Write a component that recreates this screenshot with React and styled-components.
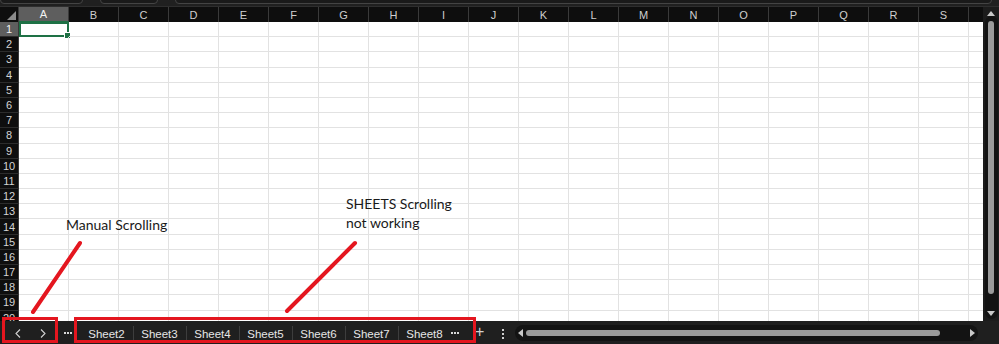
import React from 'react';
import styled, { createGlobalStyle } from 'styled-components';

const GlobalStyle = createGlobalStyle`
    html, body {
        margin: 0;
        padding: 0;
        background: #1f1f1f;
    }
    * {
        box-sizing: border-box;
    }
`;

const COLUMNS = 'ABCDEFGHIJKLMNOPQRST'.split('');
const ROWS = Array.from({ length: 20 }, (_, i) => i + 1);
const SHEETS = ['Sheet2', 'Sheet3', 'Sheet4', 'Sheet5', 'Sheet6', 'Sheet7', 'Sheet8'];
const RED = '#e4161f';

const Window = styled.div`
    position: relative;
    width: 999px;
    height: 344px;
    overflow: hidden;
    display: flex;
    flex-direction: column;
    background: #1f1f1f;
    font-family: "Liberation Sans", Arial, sans-serif;
`;

const FormulaStrip = styled.div`
    height: 7px;
    display: flex;
    align-items: flex-end;
    padding: 0 7px 2px 0;
    gap: 17px;
    background: #202020;
    border-bottom: 1px solid #2e2e2e;
    overflow: hidden;
`;

const StripBox = styled.div`
    width: ${p => p.$width ? `${p.$width}px` : 'auto'};
    flex: ${p => p.$grow ? 1 : 'none'};
    height: 20px;
    background: #1a1a1a;
    border: 1px solid #444;
    border-radius: 4px;
`;

const Main = styled.div`
    display: flex;
    height: 314px;
`;

const Sheet = styled.div`
    position: relative;
    flex: 1;
    overflow: hidden;
    background: #fff;
`;

const HeaderRow = styled.div`
    display: flex;
    height: 15px;
    background: #0e0e0e;
`;

const Corner = styled.div`
    position: relative;
    width: 19px;
    flex: none;
    border-right: 1px solid #3a3a3a;
    &::after {
        content: '';
        position: absolute;
        right: 2px;
        bottom: 2px;
        border-style: solid;
        border-width: 0 0 9px 9px;
        border-color: transparent transparent #8a8a8a transparent;
    }
`;

const ColHead = styled.div`
    width: 50px;
    flex: none;
    display: flex;
    align-items: center;
    justify-content: center;
    font-size: 11px;
    color: ${p => p.$active ? '#f2f2f2' : '#cfcfcf'};
    background: ${p => p.$active ? '#5e5e5e' : 'transparent'};
    border-right: 1px solid #3a3a3a;
    border-bottom: ${p => p.$active ? '1px solid #1e7145' : 'none'};
`;

const Row = styled.div`
    display: flex;
    height: 15.2px;
`;

const RowHead = styled.div`
    width: 19px;
    flex: none;
    display: flex;
    align-items: center;
    justify-content: center;
    font-size: 11px;
    color: ${p => p.$active ? '#f2f2f2' : '#d4d4d4'};
    background: ${p => p.$active ? '#5e5e5e' : '#0e0e0e'};
    border-bottom: 1px solid #2c2c2c;
    border-right: 1px solid #3a3a3a;
`;

const Cell = styled.div`
    position: relative;
    width: 50px;
    flex: none;
    border-right: 1px solid #e2e2e2;
    border-bottom: 1px solid #e2e2e2;
    ${p => p.$selected && `
        border: 2px solid #1e7145;
        &::after {
            content: '';
            position: absolute;
            right: -4px;
            bottom: -4px;
            width: 5px;
            height: 5px;
            background: #1e7145;
            border: 1px solid #fff;
        }
    `}
`;

const VScroll = styled.div`
    width: 16px;
    flex: none;
    display: flex;
    flex-direction: column;
    align-items: center;
    padding: 4px 0 2px;
    background: #1c1c1c;
`;

const Track = styled.div`
    display: flex;
    flex-direction: ${p => p.$vertical ? 'column' : 'row'};
    align-items: center;
    background: #131313;
    border-radius: 8px;
    ${p => p.$vertical ? `
        width: 13px;
        flex: 1;
        padding: 2px 0 3px;
    ` : `
        width: 463px;
        height: 16px;
        margin-left: 11px;
        padding: 0 3px;
    `}
`;

const Thumb = styled.div`
    background: #9b9b9b;
    border-radius: 3px;
    ${p => p.$vertical ? `
        width: 6px;
        height: 273px;
        margin: 3px 0 auto;
    ` : `
        height: 6px;
        width: 414px;
        margin: 0 auto 0 3px;
    `}
`;

const Arrow = styled.div`
    width: 0;
    height: 0;
    border-style: solid;
    ${p => ({
        up: 'border-width: 0 4px 5px 4px; border-color: transparent transparent #c9c9c9 transparent;',
        down: 'border-width: 5px 4px 0 4px; border-color: #c9c9c9 transparent transparent transparent;',
        left: 'border-width: 4px 5px 4px 0; border-color: transparent #c9c9c9 transparent transparent;',
        right: 'border-width: 4px 0 4px 5px; border-color: transparent transparent transparent #c9c9c9;'
    })[p.$dir]}
`;

const BottomBar = styled.div`
    height: 23px;
    display: flex;
    align-items: center;
    background: #1f1f1f;
    color: #e2e2e2;
`;

const NavGroup = styled.div`
    width: 60px;
    display: flex;
    align-items: center;
    gap: 17px;
    padding-left: 14px;
    padding-top: 2px;
`;

const NavButton = styled.div`
    width: 8px;
    height: 10px;
    display: flex;
    align-items: center;
    justify-content: center;
`;

const Dots = styled.div`
    display: flex;
    gap: 1px;
    margin-left: ${p => p.$gap}px;
    padding-top: 1px;
    span {
        width: 2px;
        height: 2px;
        background: #d8d8d8;
    }
`;

const Tabs = styled.div`
    display: flex;
    margin-left: 8px;
    height: 100%;
`;

const Tab = styled.div`
    width: 53px;
    display: flex;
    align-items: center;
    justify-content: center;
    padding-top: 3px;
    font-size: 11.5px;
    color: #e6e6e6;
    position: relative;
    &:not(:first-child)::before {
        content: '';
        position: absolute;
        left: 0;
        top: 5px;
        bottom: 1px;
        width: 1px;
        background: #3d3d3d;
    }
`;

const Plus = styled.div`
    margin-left: 16px;
    font-size: 16px;
    font-weight: 300;
    color: #d0d0d0;
    padding-bottom: 1px;
`;

const Kebab = styled.div`
    margin-left: 18px;
    display: flex;
    flex-direction: column;
    gap: 2px;
    padding-top: 2px;
    span {
        width: 2px;
        height: 2px;
        background: #cfcfcf;
    }
`;

const Overlay = styled.svg`
    position: absolute;
    inset: 0;
    pointer-events: none;
`;

const RedBox = styled.div`
    position: absolute;
    left: ${p => p.$left}px;
    top: 317px;
    width: ${p => p.$width}px;
    height: 26px;
    border: 3px solid ${RED};
    pointer-events: none;
`;

const Note = styled.div`
    position: absolute;
    left: ${p => p.$left}px;
    top: ${p => p.$top}px;
    font-family: Lato, "Liberation Sans", sans-serif;
    font-size: 14px;
    line-height: 19px;
    color: #1a1a1a;
`;

const Chevron = ({ left }) => (
    <svg width="6" height="9" viewBox="0 0 6 9">
        <polyline
            points={left ? '5,0.5 1,4.5 5,8.5' : '1,0.5 5,4.5 1,8.5'}
            fill="none"
            stroke="#d2d2d2"
            strokeWidth="1.1"
        />
    </svg>
);

const App = () => {
    return (
        <Window>
            <GlobalStyle />
            <FormulaStrip>
                <StripBox $width={83} />
                <StripBox $width={58} />
                <StripBox $grow />
            </FormulaStrip>

            <Main>
                <Sheet>
                    <HeaderRow>
                        <Corner />
                        {COLUMNS.map(c => (
                            <ColHead key={c} $active={c === 'A'}>{c}</ColHead>
                        ))}
                    </HeaderRow>
                    {ROWS.map(r => (
                        <Row key={r}>
                            <RowHead $active={r === 1}>{r}</RowHead>
                            {COLUMNS.map(c => (
                                <Cell key={c} $selected={r === 1 && c === 'A'} />
                            ))}
                        </Row>
                    ))}
                </Sheet>
                <VScroll>
                    <Arrow $dir="up" />
                    <Track $vertical>
                        <Thumb $vertical />
                        <Arrow $dir="down" />
                    </Track>
                </VScroll>
            </Main>

            <BottomBar>
                <NavGroup>
                    <NavButton><Chevron left /></NavButton>
                    <NavButton><Chevron /></NavButton>
                </NavGroup>
                <Dots $gap={4}><span /><span /><span /></Dots>
                <Tabs>
                    {SHEETS.map(s => <Tab key={s}>{s}</Tab>)}
                </Tabs>
                <Dots $gap={0}><span /><span /><span /></Dots>
                <Plus>+</Plus>
                <Kebab><span /><span /><span /></Kebab>
                <Track>
                    <Arrow $dir="left" />
                    <Thumb />
                    <Arrow $dir="right" />
                </Track>
            </BottomBar>

            <Note $left={66} $top={215}>Manual Scrolling</Note>
            <Note $left={346} $top={194}>SHEETS Scrolling<br />not working</Note>

            <Overlay width="999" height="344">
                <line x1="80" y1="243" x2="33" y2="312" stroke={RED} strokeWidth="4" strokeLinecap="round" />
                <line x1="355" y1="243" x2="287" y2="311" stroke={RED} strokeWidth="4" strokeLinecap="round" />
            </Overlay>
            <RedBox $left={2} $width={56} />
            <RedBox $left={74} $width={402} />
        </Window>
    );
};

export default App;
